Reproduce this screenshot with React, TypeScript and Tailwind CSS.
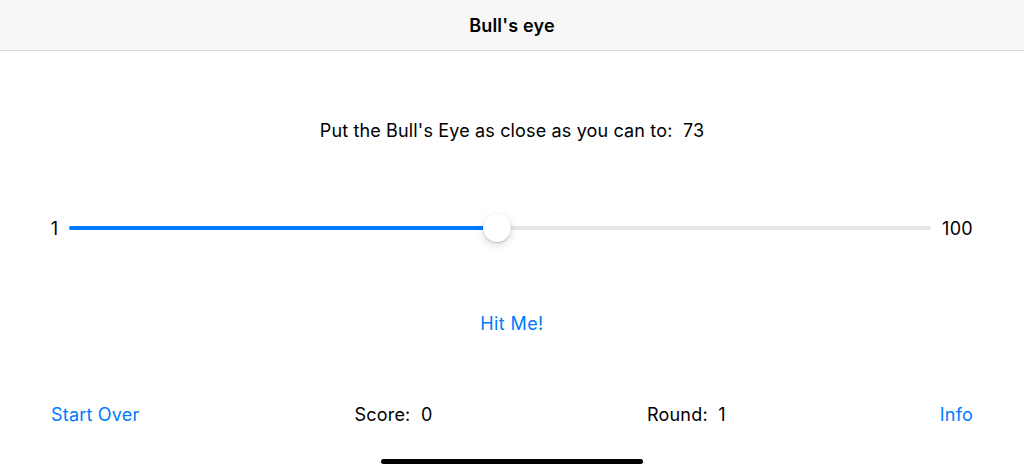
import React from "react";

export default function App() {
  const font = { fontFamily: "Inter, 'Liberation Sans', sans-serif" };
  return (
    <div className="w-[1024px] h-[473px] bg-white flex flex-col overflow-hidden text-black" style={font}>
      <div className="h-[51px] bg-[#f7f7f7] border-b border-[#d8d8d8] flex items-center justify-center">
        <span className="text-[18px] font-semibold tracking-[0.2px]">Bull's eye</span>
      </div>
      <div className="mt-[69px] h-[20px] flex items-center justify-center text-[18px] tracking-[0.15px] whitespace-pre">
        Put the Bull's Eye as close as you can to:  73
      </div>
      <div className="mt-[74px] h-[28px] flex items-center pl-[50px] pr-[51px] text-[18px] tracking-[0.3px]">
        <span className="w-[9px] text-center">1</span>
        <div className="flex-1 ml-[10px] mr-[11px] relative h-[28px] flex items-center">
          <div className="h-[4px] w-full rounded-full bg-[#e5e5e5] flex">
            <div className="h-[4px] w-[49.7%] rounded-full bg-[#007aff]" />
          </div>
          <div className="absolute left-[calc(49.7%-14px)] top-0 w-[28px] h-[28px] rounded-full bg-white shadow-[0_3px_8px_rgba(0,0,0,0.15),0_1px_1px_rgba(0,0,0,0.16),0_0_0_0.5px_rgba(0,0,0,0.04)]" />
        </div>
        <span>100</span>
      </div>
      <div className="mt-[71px] h-[20px] flex items-center justify-center text-[18px] tracking-[0.4px] text-[#007aff]">
        Hit Me!
      </div>
      <div className="mt-[68px] h-[20px] grid grid-cols-4 items-center px-[51px] text-[18px] tracking-[0.2px]">
        <span className="text-[#007aff]">Start Over</span>
        <span className="pl-[73px] whitespace-pre">Score:  0</span>
        <span className="pl-[135px] whitespace-pre">Round:  1</span>
        <span className="text-right text-[#007aff]">Info</span>
      </div>
      <div className="mt-[38px] flex justify-center">
        <div className="w-[262px] h-[5px] rounded-full bg-black" />
      </div>
    </div>
  );
}
